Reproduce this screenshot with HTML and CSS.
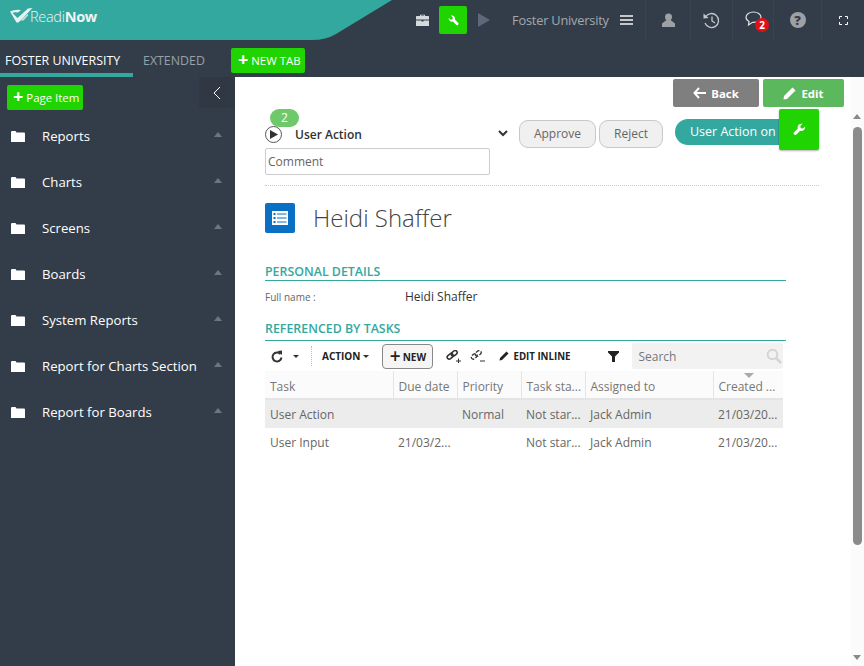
FILE: index.html
```html
<!DOCTYPE html>
<html lang="en">
<head>
    <meta charset="UTF-8">
    <meta name="viewport" content="width=device-width, initial-scale=1.0">
    <title>Heidi Shaffer</title>
    <link rel="stylesheet" href="styles.css">
</head>
<body>
    <div class="header">
        <div class="brand">
            <svg class="brand-bg" width="392" height="40" viewBox="0 0 392 40"><path d="M0 0H392L336 34Q326 40 312 40H0Z" fill="#33a89f"/></svg>
            <svg class="brand-mark" width="24" height="16" viewBox="0 0 24 16"><path d="M1 4.500Q6 2 12 3L9 5.500Q5 5 3.500 6L8.500 11L19 1.500L23.500 1L9.500 15.500H7.500Z" fill="#e8f2f1"/><path d="M11 13.500H14.500L19 8.500V6.500Z" fill="#c9dedc"/></svg>
            <span class="brand-name">Readi<b>Now</b></span>
        </div>
        <div class="topbar">
            <svg class="ico-toolbox" width="13" height="12" viewBox="0 0 13 12"><path d="M4 2V.8h5V2h3.500Q13 2 13 3v2.500H0V3q0-1 .5-1zM5 2h3V1.500H5zM0 6.500h5.500v1h2v-1H13V12H0z" fill="#d7dadd"/></svg>
            <div class="tool-btn">
                <svg class="flip" width="11" height="11" viewBox="0 0 16 16"><path d="M15 4.200l-2.900 2.700-2.600-.5-.5-2.600L11.700 1C10 .5 8.200 1 7 2.200 5.800 3.400 5.400 5.100 5.900 6.700L1.400 11.300a2 2 0 0 0 2.800 2.900L8.900 9.600c1.600.5 3.300.1 4.500-1.100 1.200-1.200 1.700-2.900 1.600-4.300z" fill="#fff"/></svg>
            </div>
            <svg class="ico-play" width="12" height="14" viewBox="0 0 12 14"><path d="M0 0L12 7L0 14Z" fill="#5d6979"/></svg>
            <span class="tenant">Foster University</span>
            <svg class="ico-menu" width="13" height="10" viewBox="0 0 13 10"><path d="M0 0h13v2H0zM0 4h13v2H0zM0 8h13v2H0z" fill="#c4c8cc"/></svg>
            <div class="top-cell user-cell">
                <svg width="13" height="14" viewBox="0 0 13 14"><circle cx="6.500" cy="4" r="3.500" fill="#9da1a6"/><path d="M4.500 7h4L13 10.500V14H0V10.500Z" fill="#9da1a6"/></svg>
            </div>
            <div class="top-cell history-cell">
                <svg width="17" height="17" viewBox="0 0 17 17"><path d="M2.500 5A7 7 0 1 1 2 11" fill="none" stroke="#c4c8cc" stroke-width="1.300"/><path d="M.5 1.500L5.500 6L.5 6.500Z" fill="#c4c8cc"/><path d="M9 4.500V9L12 11" fill="none" stroke="#c4c8cc" stroke-width="1.300"/></svg>
            </div>
            <div class="top-cell chat-cell">
                <svg width="17" height="15" viewBox="0 0 17 15"><path d="M8.500 1C4.500 1 1 3 1 6.300c0 2 1.500 3.500 3 4.200L3.500 14L7.500 11.300c4 .3 8.500-1.500 8.500-5C16 3 12.500 1 8.500 1Z" fill="none" stroke="#dfe1e3" stroke-width="1.200"/></svg>
                <span class="chat-badge">2</span>
            </div>
            <div class="top-cell help-cell"><span class="help-dot">?</span></div>
            <div class="top-cell full-cell">
                <svg width="9" height="9" viewBox="0 0 9 9"><path d="M.5 3V.5H3M6 .5H8.500V3M8.500 6V8.500H6M3 8.500H.5V6" fill="none" stroke="#fff" stroke-width="1"/></svg>
            </div>
        </div>
    </div>

    <div class="tabs">
        <a class="tab tab-active" href="javascript:;">FOSTER UNIVERSITY</a>
        <a class="tab" href="javascript:;">EXTENDED</a>
        <a class="new-tab" href="javascript:;"><span class="plus">+</span>NEW TAB</a>
    </div>

    <div class="main">
        <div class="side">
            <div class="side-top">
                <a class="page-item" href="javascript:;"><span class="plus">+</span>Page Item</a>
                <div class="collapse">
                    <svg width="8" height="14" viewBox="0 0 8 14"><path d="M7 1L1 7L7 13" fill="none" stroke="#fff" stroke-width="1"/></svg>
                </div>
            </div>
            <ul class="side-list">
                <li><svg class="folder" width="14" height="11" viewBox="0 0 14 11"><path d="M0 1q0-1 1-1h3.500l1 1.500H13q1 0 1 1V11H0z" fill="#fff"/></svg><span>Reports</span><i class="caret"></i></li>
                <li><svg class="folder" width="14" height="11" viewBox="0 0 14 11"><path d="M0 1q0-1 1-1h3.500l1 1.500H13q1 0 1 1V11H0z" fill="#fff"/></svg><span>Charts</span><i class="caret"></i></li>
                <li><svg class="folder" width="14" height="11" viewBox="0 0 14 11"><path d="M0 1q0-1 1-1h3.500l1 1.500H13q1 0 1 1V11H0z" fill="#fff"/></svg><span>Screens</span><i class="caret"></i></li>
                <li><svg class="folder" width="14" height="11" viewBox="0 0 14 11"><path d="M0 1q0-1 1-1h3.500l1 1.500H13q1 0 1 1V11H0z" fill="#fff"/></svg><span>Boards</span><i class="caret"></i></li>
                <li><svg class="folder" width="14" height="11" viewBox="0 0 14 11"><path d="M0 1q0-1 1-1h3.500l1 1.500H13q1 0 1 1V11H0z" fill="#fff"/></svg><span>System Reports</span><i class="caret"></i></li>
                <li><svg class="folder" width="14" height="11" viewBox="0 0 14 11"><path d="M0 1q0-1 1-1h3.500l1 1.500H13q1 0 1 1V11H0z" fill="#fff"/></svg><span>Report for Charts Section</span><i class="caret"></i></li>
                <li><svg class="folder" width="14" height="11" viewBox="0 0 14 11"><path d="M0 1q0-1 1-1h3.500l1 1.500H13q1 0 1 1V11H0z" fill="#fff"/></svg><span>Report for Boards</span><i class="caret"></i></li>
            </ul>
        </div>

        <div class="content">
            <div class="actions">
                <a class="btn-back" href="javascript:;">
                    <svg width="13" height="12" viewBox="0 0 13 12"><path d="M6 1L1.500 6L6 11M2 6H13" fill="none" stroke="#fff" stroke-width="2"/></svg>Back</a>
                <a class="btn-edit" href="javascript:;">
                    <svg width="13" height="13" viewBox="0 0 13 13"><path d="M9.500 .5L12.500 3.500L4 12L.5 12.500L1 9Z" fill="#fff"/></svg>Edit</a>
            </div>

            <div class="task-bar">
                <div class="task-left">
                    <div class="task-select">
                        <span class="task-play"><svg width="8" height="9" viewBox="0 0 8 9"><path d="M0 0L8 4.500L0 9Z" fill="#333"/></svg></span>
                        <span class="task-name">User Action</span>
                        <svg class="task-chev" width="10" height="7" viewBox="0 0 10 7"><path d="M1 1L5 5L9 1" fill="none" stroke="#333" stroke-width="2"/></svg>
                        <span class="task-count">2</span>
                    </div>
                    <input class="comment" type="text" placeholder="Comment">
                </div>
                <div class="task-btns">
                    <a class="pill" href="javascript:;">Approve</a>
                    <a class="pill pill-reject" href="javascript:;">Reject</a>
                </div>
                <div class="task-status">
                    <span class="status-pill">User Action on</span>
                    <div class="status-tool">
                        <svg width="13" height="13" viewBox="0 0 16 16"><path d="M15 4.200l-2.900 2.700-2.600-.5-.5-2.600L11.700 1C10 .5 8.200 1 7 2.200 5.800 3.400 5.400 5.100 5.900 6.700L1.400 11.300a2 2 0 0 0 2.800 2.900L8.900 9.600c1.600.5 3.300.1 4.500-1.100 1.200-1.200 1.700-2.900 1.600-4.300z" fill="#fff"/></svg>
                    </div>
                </div>
            </div>

            <div class="title-row">
                <span class="title-icon">
                    <svg width="16" height="14" viewBox="0 0 16 14"><path d="M0 0H16V14H0Z" fill="#fff"/><path d="M1.500 2h2v2h-2zM1.500 6h2v2h-2zM1.500 10h2v2h-2zM5 2.500h9.500v1H5zM5 6.500h9.500v1H5zM5 10.500h9.500v1H5z" fill="#0a70c4"/></svg>
                </span>
                <h1>Heidi Shaffer</h1>
            </div>

            <h3 class="section section-first">PERSONAL DETAILS</h3>
            <div class="field"><label>Full name :</label><span>Heidi Shaffer</span></div>

            <h3 class="section section-tasks">REFERENCED BY TASKS</h3>
            <div class="toolbar">
                <svg class="tb-refresh" width="12" height="13" viewBox="0 0 12 13"><path d="M9.500 4A4.500 4.500 0 1 0 10.500 7.500" fill="none" stroke="#333" stroke-width="2"/><path d="M6.500 1L11 .5V5Z" fill="#333"/></svg>
                <i class="tb-caret"></i>
                <span class="tb-sep"></span>
                <span class="tb-action">ACTION</span>
                <i class="tb-caret tb-caret-action"></i>
                <a class="tb-new" href="javascript:;"><span class="tb-plus">+</span>NEW</a>
                <svg class="tb-link" width="15" height="13" viewBox="0 0 15 13"><g fill="none" stroke="#333" stroke-width="1.600"><rect x="1" y="4.500" width="6.500" height="4" rx="2" transform="rotate(-40 4 6.500)"/><rect x="5" y="1.500" width="6.500" height="4" rx="2" transform="rotate(-40 8 3.500)"/></g><path d="M10 10.500h5v1h-5zM12 8.500h1v5h-1z" fill="#333"/></svg>
                <svg class="tb-unlink" width="15" height="13" viewBox="0 0 15 13"><g fill="none" stroke="#333" stroke-width="1.300"><rect x="1" y="4.500" width="6.500" height="4" rx="2" transform="rotate(-40 4 6.500)" stroke-dasharray="4 1.500"/><rect x="5" y="1.500" width="6.500" height="4" rx="2" transform="rotate(-40 8 3.500)" stroke-dasharray="4 1.500"/></g><path d="M10 10.500h5v1h-5z" fill="#333"/></svg>
                <svg class="tb-pencil" width="10" height="10" viewBox="0 0 10 10"><path d="M7.500 .5L9.500 2.500L3 9L.5 9.500L1 7Z" fill="#222"/></svg>
                <span class="tb-inline">EDIT INLINE</span>
                <svg class="tb-filter" width="11" height="11" viewBox="0 0 11 11"><path d="M0 0H11V1.500L7 5.500V11L4 11V5.500L0 1.500Z" fill="#222"/></svg>
                <div class="tb-search">
                    <span>Search</span>
                    <svg width="16" height="16" viewBox="0 0 16 16"><circle cx="6.500" cy="6.500" r="4.800" fill="none" stroke="#d4d4d4" stroke-width="2"/><path d="M10 10L15 15" stroke="#d4d4d4" stroke-width="2.500"/></svg>
                </div>
            </div>
            <table class="grid">
                <thead>
                    <tr>
                        <th class="c-task">Task</th>
                        <th class="c-short">Due date</th>
                        <th class="c-short">Priority</th>
                        <th class="c-short">Task sta...</th>
                        <th class="c-task">Assigned to</th>
                        <th class="c-created">Created ...<i class="sort"></i></th>
                    </tr>
                </thead>
                <tbody>
                    <tr class="row-on"><td>User Action</td><td></td><td>Normal</td><td>Not star...</td><td>Jack Admin</td><td>21/03/20...</td></tr>
                    <tr><td>User Input</td><td>21/03/2...</td><td></td><td>Not star...</td><td>Jack Admin</td><td>21/03/20...</td></tr>
                </tbody>
            </table>
        </div>

        <div class="scroll">
            <i class="scroll-up"></i>
            <div class="scroll-thumb"></div>
            <i class="scroll-down"></i>
        </div>
    </div>
</body>
</html>
```

FILE: styles.css
```css
html, body {
    height: 100%;
}
body {
    margin: 0;
    padding: 0;
    background-color: #fff;
    font-family: "Open Sans", "Noto Sans", sans-serif;
    font-size: 12px;
    color: #555;
    display: flex;
    flex-direction: column;
    overflow: hidden;
}
a {
    text-decoration: none;
}
.flip {
    transform: scaleX(-1);
}

/* top bar */
.header {
    height: 40px;
    flex: none;
    display: flex;
    background-color: #333d49;
}
.brand {
    position: relative;
    width: 392px;
    flex: none;
}
.brand-bg {
    position: absolute;
    left: 0;
    top: 0;
}
.brand-mark {
    position: absolute;
    left: 9px;
    top: 7px;
}
.brand-name {
    position: absolute;
    left: 30px;
    top: 7px;
    font-size: 14.500px;
    line-height: 20px;
    font-weight: 300;
    color: #eef5f4;
    letter-spacing: -0.300px;
}
.brand-name b {
    font-weight: 700;
}
.topbar {
    flex: 1;
    display: flex;
    align-items: center;
    height: 40px;
}
.ico-toolbox {
    margin-left: 24px;
}
.tool-btn {
    width: 28px;
    height: 28px;
    margin-left: 10px;
    background-color: #1fd400;
    border-radius: 2px;
    display: flex;
    align-items: center;
    justify-content: center;
}
.ico-play {
    margin-left: 11px;
}
.tenant {
    margin-left: 22px;
    width: 105px;
    font-size: 12.800px;
    color: #a4a9af;
    white-space: nowrap;
    letter-spacing: -0.200px;
}
.ico-menu {
    margin-left: 3px;
    margin-right: 12px;
}
.top-cell {
    height: 40px;
    border-left: 1px solid #3a444f;
    display: flex;
    align-items: center;
    justify-content: center;
    position: relative;
}
.user-cell {
    width: 44px;
}
.history-cell {
    width: 41px;
}
.chat-cell {
    width: 41px;
    padding-bottom: 3px;
    box-sizing: border-box;
}
.help-cell {
    width: 47px;
}
.full-cell {
    flex: 1;
}
.chat-badge {
    position: absolute;
    left: 22px;
    top: 18px;
    width: 14px;
    height: 14px;
    border-radius: 7px;
    background-color: #e0101a;
    color: #fff;
    font-size: 10px;
    font-weight: 700;
    line-height: 14px;
    text-align: center;
}
.help-dot {
    width: 16px;
    height: 16px;
    border-radius: 8px;
    margin-bottom: 1px;
    background-color: #9da1a6;
    color: #333d49;
    font-size: 13px;
    font-weight: 800;
    line-height: 16px;
    text-align: center;
}

/* tabs */
.tabs {
    height: 37px;
    flex: none;
    display: flex;
    background-color: #333d49;
}
.tab {
    height: 37px;
    box-sizing: border-box;
    line-height: 42px;
    font-size: 12.400px;
    color: #98a0a8;
    width: 96px;
    text-align: left;
    padding-left: 10px;
    white-space: nowrap;
}
.tab-active {
    width: 133px;
    padding-left: 5px;
    color: #fff;
    border-bottom: 4px solid #33a89f;
}
.new-tab {
    height: 25px;
    margin: 8px 0 0 2px;
    padding: 0 4px 0 7px;
    background-color: #1fd400;
    border-radius: 2px;
    color: #fff;
    font-size: 11.400px;
    line-height: 25px;
}
.plus {
    font-size: 18px;
    font-weight: 700;
    line-height: 20px;
    margin-right: 3px;
    vertical-align: -1px;
}

/* sidebar */
.main {
    flex: 1;
    display: flex;
    min-height: 0;
}
.side {
    width: 235px;
    flex: none;
    background-color: #333d49;
}
.side-top {
    display: flex;
    justify-content: space-between;
    align-items: flex-start;
    height: 36px;
}
.page-item {
    height: 25px;
    margin: 8px 0 0 7px;
    padding: 0 4px 0 6px;
    background-color: #1fd400;
    border-radius: 2px;
    color: #fff;
    font-size: 11.400px;
    line-height: 25px;
}
.collapse {
    width: 36px;
    height: 31px;
    background-color: #2f3843;
    display: flex;
    align-items: center;
    justify-content: center;
}
.side-list {
    margin: 0;
    padding: 0;
    list-style: none;
}
.side-list li {
    height: 46px;
    display: flex;
    align-items: center;
    padding-left: 11px;
    color: #fff;
    font-size: 13.200px;
}
.folder {
    flex: none;
    margin-right: 17px;
}
.side-list span {
    flex: 1;
    white-space: nowrap;
}
.caret {
    width: 0;
    height: 0;
    margin: 0 13px 4px 0;
    border-left: 4px solid transparent;
    border-right: 4px solid transparent;
    border-bottom: 5px solid #6d7680;
}

/* content */
.content {
    flex: 1;
    min-width: 0;
    padding-left: 30px;
}
.actions {
    display: flex;
    justify-content: flex-end;
    gap: 4px;
    margin-top: 2px;
    margin-right: 7px;
}
.btn-back, .btn-edit {
    height: 28px;
    border-radius: 2px;
    color: #fff;
    font-size: 11.400px;
    font-weight: 700;
    display: flex;
    align-items: center;
    justify-content: center;
    gap: 5px;
}
.btn-back {
    width: 86px;
    background-color: #7f7f7f;
}
.btn-edit {
    width: 81px;
    background-color: #5cb85c;
}
.task-bar {
    display: flex;
    align-items: flex-start;
    height: 66px;
    margin-right: 32px;
    border-bottom: 1px dotted #ccc;
    margin-top: 12px;
    margin-bottom: 17px;
}
.task-left {
    width: 225px;
    padding-top: 5px;
}
.task-select {
    position: relative;
    width: 243px;
    height: 20px;
    display: flex;
    align-items: center;
}
.task-play {
    width: 17px;
    height: 17px;
    border: 1px solid #555;
    border-radius: 9px;
    flex: none;
    display: flex;
    align-items: center;
    justify-content: center;
    padding-left: 1px;
    box-sizing: border-box;
}
.task-name {
    margin-left: 13px;
    font-size: 12px;
    font-weight: 600;
    color: #333;
    flex: 1;
}
.task-chev {
    margin-top: -2px;
}
.task-count {
    position: absolute;
    left: 5px;
    top: -15px;
    width: 29px;
    height: 18px;
    border-radius: 9px;
    background-color: #6fc96a;
    color: #fff;
    line-height: 18px;
    text-align: center;
    font-size: 12px;
}
.comment {
    display: block;
    width: 225px;
    height: 27px;
    margin-top: 4px;
    padding: 0 2px;
    box-sizing: border-box;
    border: 1px solid #ccc;
    border-radius: 2px;
    font-family: inherit;
    font-size: 12px;
    color: #555;
}
.comment::placeholder {
    color: #666;
    opacity: 1;
}
.task-btns {
    display: flex;
    gap: 3px;
    margin-left: 29px;
    margin-top: 1px;
}
.pill {
    width: 77px;
    height: 28px;
    box-sizing: border-box;
    border: 1px solid #c8c8c8;
    border-radius: 9px;
    background-color: #f0f0f0;
    color: #666;
    font-size: 12px;
    line-height: 26px;
    text-align: center;
}
.pill-reject {
    width: 64px;
}
.task-status {
    display: flex;
    align-items: flex-start;
    margin-left: 12px;
}
.status-pill {
    width: 116px;
    height: 26px;
    margin-right: -12px;
    padding-left: 15px;
    box-sizing: border-box;
    border-radius: 13px 0 0 13px;
    background-color: #33a89f;
    color: #fff;
    font-size: 12.500px;
    line-height: 26px;
    white-space: nowrap;
}
.status-tool {
    position: relative;
    width: 40px;
    height: 41px;
    margin-top: -10px;
    background-color: #1fd400;
    border-radius: 2px;
    box-shadow: 0 1px 2px rgba(0,0,0,.3);
    display: flex;
    align-items: center;
    justify-content: center;
}
.title-row {
    display: flex;
    align-items: center;
    height: 30px;
}
.title-icon {
    width: 30px;
    height: 30px;
    border-radius: 2px;
    background-color: #0a70c4;
    display: flex;
    align-items: center;
    justify-content: center;
    flex: none;
}
h1 {
    margin: -2px 0 0 18px;
    font-size: 24px;
    font-weight: 300;
    color: #444;
}
.section {
    margin: 0;
    width: 521px;
    height: 17px;
    border-bottom: 1px solid #33a89f;
    color: #33a89f;
    font-size: 12.400px;
    font-weight: 600;
    line-height: 17px;
}
.section-first {
    margin-top: 30px;
}
.section-tasks {
    margin-top: 8px;
    padding-top: 2px;
    height: 14px;
    line-height: 14px;
    padding-bottom: 4px;
}
.field {
    display: flex;
    align-items: center;
    height: 31px;
}
.field label {
    width: 140px;
    font-size: 10px;
    color: #666;
}
.field span {
    font-size: 12px;
    color: #333;
}
.toolbar {
    display: flex;
    align-items: center;
    width: 518px;
    height: 30px;
    color: #222;
}
.tb-refresh {
    margin-left: 6px;
}
.tb-caret {
    width: 0;
    height: 0;
    margin-left: 10px;
    border-left: 3px solid transparent;
    border-right: 3px solid transparent;
    border-top: 3px solid #333;
}
.tb-sep {
    height: 20px;
    margin-left: 12px;
    border-left: 1px dotted #bbb;
}
.tb-action {
    margin-left: 10px;
    font-size: 10px;
    font-weight: 700;
}
.tb-caret-action {
    margin-left: 3px;
}
.tb-new {
    width: 51px;
    height: 25px;
    margin-left: 13px;
    box-sizing: border-box;
    border: 1px solid #888;
    border-radius: 4px;
    background-color: #f5f5f5;
    color: #222;
    font-size: 10px;
    font-weight: 700;
    line-height: 23px;
    text-align: center;
}
.tb-plus {
    font-size: 19px;
    font-weight: 600;
    vertical-align: -2px;
    margin-right: 2px;
}
.tb-link {
    margin-left: 13px;
}
.tb-unlink {
    margin-left: 9px;
}
.tb-pencil {
    margin-left: 14px;
}
.tb-inline {
    margin-left: 4px;
    font-size: 9.700px;
    font-weight: 700;
    white-space: nowrap;
}
.tb-filter {
    margin-left: 38px;
}
.tb-search {
    margin-left: 13px;
    flex: 1;
    height: 26px;
    padding: 0 1px 0 6px;
    background-color: #f2f2f2;
    border-radius: 2px;
    display: flex;
    align-items: center;
    justify-content: space-between;
    color: #777;
}
.grid {
    width: 518px;
    table-layout: fixed;
    border-collapse: collapse;
}
.grid th {
    box-sizing: border-box;
    height: 28px;
    padding: 4px 0 0 5px;
    background-color: #fbfbfb;
    border-bottom: 2px solid #e4e4e4;
    border-left: 1px solid #e4e4e4;
    font-weight: 400;
    color: #777;
    font-size: 12px;
    text-align: left;
    white-space: nowrap;
    position: relative;
}
.grid th:first-child {
    border-left: 0;
}
.c-task {
    width: 128px;
}
.c-short {
    width: 64px;
}
.sort {
    position: absolute;
    left: 30px;
    top: 2px;
    width: 0;
    height: 0;
    border-left: 5px solid transparent;
    border-right: 5px solid transparent;
    border-top: 5px solid #aaa;
}
.grid td {
    height: 28px;
    padding: 0 0 0 5px;
    font-size: 12px;
    color: #666;
    white-space: nowrap;
}
.row-on td {
    background-color: #ececec;
}

/* scrollbar */
.scroll {
    width: 13px;
    flex: none;
    background-color: #fbfbfb;
    position: relative;
    display: flex;
    flex-direction: column;
    align-items: center;
    padding-right: 1px;
    box-sizing: border-box;
}
.scroll-up {
    margin-top: 37px;
    border-left: 4px solid transparent;
    border-right: 4px solid transparent;
    border-bottom: 5px solid #888;
}
.scroll-thumb {
    width: 9px;
    height: 418px;
    margin-top: 8px;
    background-color: #8b8b8b;
    border-radius: 5px;
}
.scroll-down {
    margin-top: 110px;
    border-left: 4px solid transparent;
    border-right: 4px solid transparent;
    border-top: 5px solid #888;
}
```
